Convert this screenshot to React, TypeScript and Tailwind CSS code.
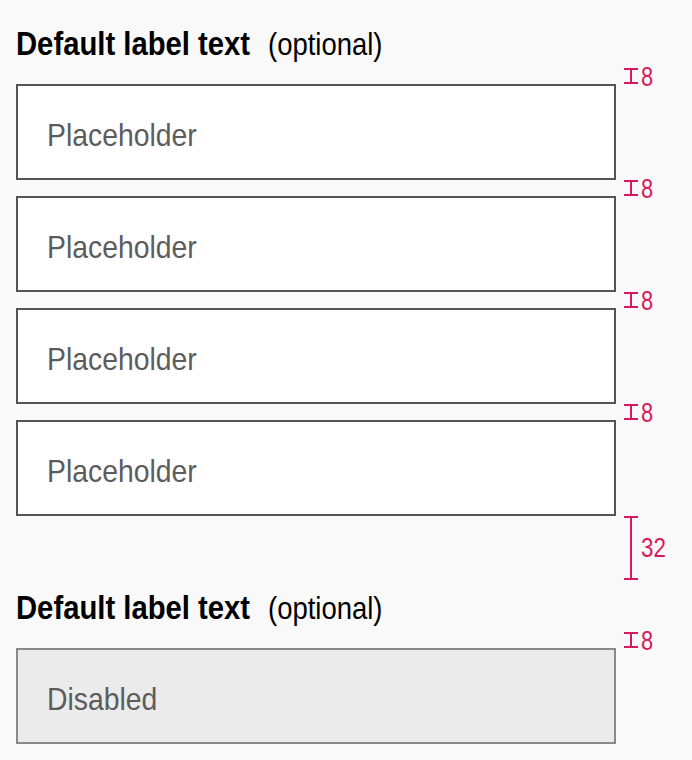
import React from "react";

const FONT = { fontFamily: '"Liberation Sans", Arial, sans-serif' };

function Gap({ h, label }: { h: number; label: string }) {
  const big = h > 20;
  return (
    <>
      <div style={{ height: h }} />
      <div className="relative flex items-center text-[#d81b60]" style={{ height: h }}>
        <svg width="14" height={h} viewBox={`0 0 14 ${h}`} className="shrink-0">
          <line x1="7" y1="1" x2="7" y2={h - 1} stroke="#d81b60" strokeWidth="2" />
          <line x1="0" y1="1" x2="14" y2="1" stroke="#d81b60" strokeWidth="2" />
          <line x1="0" y1={h - 1} x2="14" y2={h - 1} stroke="#d81b60" strokeWidth="2" />
        </svg>
        <span
          className={
            big
              ? "ml-[3px] inline-block origin-left scale-x-[0.8] text-[28px] leading-none"
              : "ml-[3px] inline-block origin-left scale-x-[0.78] text-[28px] leading-none pt-[2px]"
          }
        >
          {label}
        </span>
      </div>
    </>
  );
}

function Label() {
  return (
    <>
      <div className="h-[52px] flex items-center text-black">
        <span className="inline-block origin-left scale-x-90 whitespace-nowrap pt-[6px]">
          <span className="text-[32.5px] font-bold leading-none">Default label text</span>
          <span className="ml-[20px] text-[30.5px] leading-none">(optional)</span>
        </span>
      </div>
      <div />
    </>
  );
}

function Input({ text, disabled }: { text: string; disabled?: boolean }) {
  return (
    <>
      <div
        className={
          disabled
            ? "h-[96px] border-2 border-[#8a8a8a] bg-[#ebebeb] flex items-center pl-[29px]"
            : "h-[96px] border-2 border-[#555555] bg-white flex items-center pl-[29px]"
        }
      >
        <span className="inline-block origin-left scale-x-90 text-[31.5px] leading-none text-[#5c5c5c] pt-[8px]">
          {text}
        </span>
      </div>
      <div />
    </>
  );
}

export default function App() {
  return (
    <div className="w-[692px] h-[760px] bg-[#f9f9f9] overflow-hidden" style={FONT}>
      <div className="pt-[16px] pl-[16px] grid grid-cols-[600px_auto] gap-x-[8px]">
        <Label />
        <Gap h={16} label="8" />
        <Input text="Placeholder" />
        <Gap h={16} label="8" />
        <Input text="Placeholder" />
        <Gap h={16} label="8" />
        <Input text="Placeholder" />
        <Gap h={16} label="8" />
        <Input text="Placeholder" />
        <Gap h={64} label="32" />
        <Label />
        <Gap h={16} label="8" />
        <Input text="Disabled" disabled />
      </div>
    </div>
  );
}
